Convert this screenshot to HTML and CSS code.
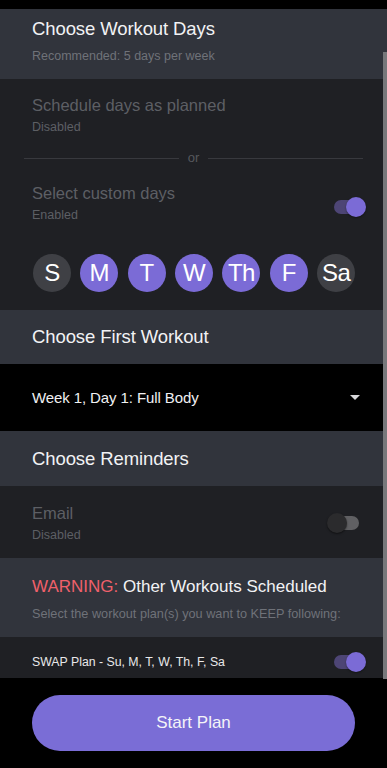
FILE: index.html
```html
<!DOCTYPE html>
<html>
<head>
<meta charset="utf-8">
<link rel="stylesheet" href="styles.css">
</head>
<body>
<div class="screen">
  <div class="topbar"></div>
  <div class="content">
    <section class="head head-days">
      <h2 class="title">Choose Workout Days</h2>
      <p class="hint">Recommended: 5 days per week</p>
    </section>
    <section class="panel days-panel">
      <div class="option">
        <div class="opt-text">
          <div class="opt-title">Schedule days as planned</div>
          <div class="opt-sub">Disabled</div>
        </div>
      </div>
      <div class="divider"><span class="line"></span><span class="or">or</span><span class="line"></span></div>
      <div class="option option-custom">
        <div class="opt-text">
          <div class="opt-title">Select custom days</div>
          <div class="opt-sub">Enabled</div>
        </div>
        <div class="toggle on"><span class="track"></span><span class="knob"></span></div>
      </div>
      <div class="days">
        <span class="day">S</span>
        <span class="day sel">M</span>
        <span class="day sel">T</span>
        <span class="day sel">W</span>
        <span class="day sel">Th</span>
        <span class="day sel">F</span>
        <span class="day">Sa</span>
      </div>
    </section>
    <section class="head head-simple">
      <h2 class="title">Choose First Workout</h2>
    </section>
    <section class="dropdown">
      <span class="dd-text">Week 1, Day 1: Full Body</span>
      <svg class="dd-arrow" width="10" height="5" viewBox="0 0 10 5"><path d="M0 0 L10 0 L5 5 Z" fill="#d8d8da"/></svg>
    </section>
    <section class="head head-simple head-rem">
      <h2 class="title">Choose Reminders</h2>
    </section>
    <section class="panel email-panel">
      <div class="option">
        <div class="opt-text">
          <div class="opt-title">Email</div>
          <div class="opt-sub">Disabled</div>
        </div>
        <div class="toggle off"><span class="track"></span><span class="knob"></span></div>
      </div>
    </section>
    <section class="head head-warning">
      <h2 class="title warn-title"><span class="warn">WARNING:</span> Other Workouts Scheduled</h2>
      <p class="hint hint-small">Select the workout plan(s) you want to KEEP following:</p>
    </section>
    <section class="panel swap-panel">
      <span class="swap-text">SWAP Plan - Su, M, T, W, Th, F, Sa</span>
      <div class="toggle on"><span class="track"></span><span class="knob"></span></div>
    </section>
  </div>
  <div class="footer">
    <button class="start">Start Plan</button>
  </div>
  <div class="scrollbar"></div>
</div>
</body>
</html>
```

FILE: styles.css
```css
* { box-sizing: border-box; }
html, body { margin: 0; padding: 0; background: #000; }
body {
  font-family: "Liberation Sans", Arial, Helvetica, sans-serif;
  width: 387px;
  height: 768px;
  overflow: hidden;
}
.screen { position: relative; width: 387px; height: 768px; display: flex; flex-direction: column; }
.topbar { height: 9px; background: #000; flex: none; }
.content { display: flex; flex-direction: column; flex: none; }

.head { background: #31343c; padding: 0 32px; display: flex; flex-direction: column; justify-content: center; flex: none; }
.head-days { height: 70px; padding-bottom: 6px; }
.head-simple { height: 54px; }
.head-rem { height: 55px; }
.head-warning { height: 79px; padding-top: 2px; }

.title { margin: 0; font-size: 18.5px; font-weight: normal; color: #f2f2f4; letter-spacing: -0.1px; line-height: 22px; }
.hint { margin: 8px 0 0; font-size: 12.5px; color: #6f7279; line-height: 16px; }
.hint-small { font-size: 12.7px; margin-top: 8px; }
.warn-title { font-size: 17px; letter-spacing: 0; }
.warn { color: #f0606b; }

.panel { background: #1f2024; flex: none; }
.days-panel { height: 231px; padding-top: 16px; }
.option { display: flex; align-items: center; justify-content: space-between; padding: 0 19px 0 32px; }
.opt-title { font-size: 16.5px; color: #5d5f64; line-height: 20px; }
.opt-sub { font-size: 12.5px; color: #5d5f64; margin-top: 4px; line-height: 16px; }
.divider { display: flex; align-items: center; padding: 0 24px; margin: 15px 0 17px; height: 16px; }
.divider .line { flex: 1; height: 1px; background: #38393e; }
.divider .or { color: #56585d; font-size: 13px; padding: 0 9px; line-height: 16px; }
.option-custom .toggle { margin-top: 8px; }

.days { display: flex; gap: 9.5px; padding: 0 32px 0 33px; margin-top: 31px; }
.day { width: 38px; height: 38px; border-radius: 50%; background: #3f4045; color: #fff; display: flex; align-items: center; justify-content: center; font-size: 24px; letter-spacing: -0.6px; }
.day.sel { background: #7b6bd6; }

.toggle { position: relative; width: 34px; height: 24px; flex: none; }
.toggle .track { position: absolute; top: 5px; height: 14px; border-radius: 7px; }
.toggle .knob { position: absolute; top: 2px; width: 20px; height: 20px; border-radius: 50%; }
.toggle.on .track { left: 0; width: 26px; background: #4d4575; }
.toggle.on .knob { left: 12px; background: #7b6bd6; box-shadow: 0 1px 2px rgba(0,0,0,0.4); }
.toggle.off .track { left: 7px; width: 27px; background: #606063; }
.toggle.off .knob { left: 2px; background: #2b2b2d; box-shadow: 0 1px 2px rgba(0,0,0,0.5); }

.dropdown { background: #000; height: 67px; display: flex; align-items: center; justify-content: space-between; padding: 0 27px 0 32px; flex: none; }
.dd-text { font-size: 15px; color: #f0f0f2; letter-spacing: -0.1px; }

.email-panel { height: 72px; display: flex; flex-direction: column; justify-content: center; padding-top: 2px; }
.email-panel .option { padding-right: 28px; }

.swap-panel { height: 41px; display: flex; align-items: center; justify-content: space-between; padding: 9px 19px 0 32px; }
.swap-text { font-size: 12.3px; color: #e8e8ea; }

.footer { flex: 1; background: #000; padding: 17px 32px 0; }
.start { width: 323px; height: 56px; border: none; border-radius: 28px; background: #7a6dd6; color: #f4f4f8; font-family: inherit; font-size: 17px; display: block; }

.scrollbar { position: absolute; left: 383px; top: 52px; width: 4px; height: 627px; background: #77787b; }
```
